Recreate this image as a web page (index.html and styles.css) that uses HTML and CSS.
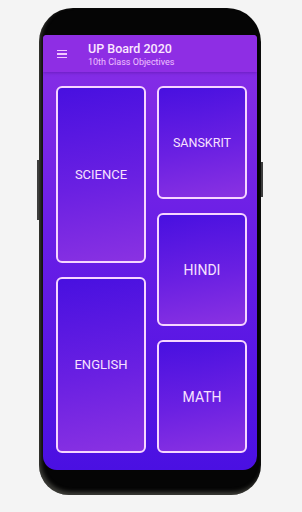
FILE: index.html
```html
<html>
	<head>
		<title>UP Board 2020</title>
		<link rel="stylesheet" href="styles.css">
	</head>
	<body>
		<div class="phone">
			<span class="side-key left-key"></span>
			<span class="side-key right-key"></span>
			<div class="screen">
				<div class="toolbar">
					<div class="menu-icon">
						<span></span><span></span><span></span>
					</div>
					<div class="titles">
						<div class="title">UP Board 2020</div>
						<div class="subtitle">10th Class Objectives</div>
					</div>
				</div>
				<div class="subjects">
					<div class="column">
						<div class="card tall">SCIENCE</div>
						<div class="card tall">ENGLISH</div>
					</div>
					<div class="column">
						<div class="card">SANSKRIT</div>
						<div class="card big-text">HINDI</div>
						<div class="card big-text">MATH</div>
					</div>
				</div>
			</div>
		</div>
	</body>
</html>
```

FILE: styles.css
```css
body {
	margin: 0;
	padding: 8px 0 0 39px;
	background: #f4f4f4;
	font-family: Roboto, "Liberation Sans", sans-serif;
}

.phone {
	position: relative;
	width: 214px;
	height: 435px;
	padding: 27px 4px 25px 4px;
	background: #050505;
	border-radius: 34px 34px 30px 30px;
	box-shadow: inset 2px -3px 4px rgba(120, 120, 110, 0.5);
}

.side-key {
	position: absolute;
	width: 2px;
	background: #3c3c3c;
}

.left-key {
	left: -2px;
	top: 152px;
	height: 60px;
}

.right-key {
	right: -2px;
	top: 154px;
	height: 35px;
}

.screen {
	height: 435px;
	border-radius: 4px 4px 14px 14px;
	overflow: hidden;
	background: linear-gradient(180deg, #8a30e6 0%, #6a1ee6 45%, #4a10e2 100%);
	display: flex;
	flex-direction: column;
}

.toolbar {
	height: 37px;
	display: flex;
	align-items: center;
	background: #8e2ee4;
	box-shadow: 0 1px 3px rgba(60, 0, 120, 0.35);
}

.menu-icon {
	width: 10px;
	margin: 1px 21px 0 14px;
	display: flex;
	flex-direction: column;
	gap: 2px;
}

.menu-icon span {
	height: 1.5px;
	background: #f2c8ff;
}

.titles {
	padding-top: 2px;
}

.title {
	color: #fbe6ff;
	font-size: 12.5px;
	font-weight: 500;
	line-height: 15px;
}

.subtitle {
	color: #eec2ff;
	font-size: 9px;
	line-height: 12px;
}

.subjects {
	display: flex;
	gap: 11px;
	padding: 14px 10px 0 13px;
}

.column {
	width: 90px;
	display: flex;
	flex-direction: column;
	gap: 14px;
}

.card {
	box-sizing: border-box;
	height: 113px;
	border: 2px solid #f6d6ff;
	border-radius: 6px;
	background: linear-gradient(170deg, #4810e0 0%, #6a20e2 55%, #8a32e2 100%);
	color: #f8e2ff;
	font-size: 12.5px;
	display: flex;
	align-items: center;
	justify-content: center;
}

.tall {
	height: 176.5px;
	font-size: 13px;
}

.big-text {
	font-size: 14px;
}
```
